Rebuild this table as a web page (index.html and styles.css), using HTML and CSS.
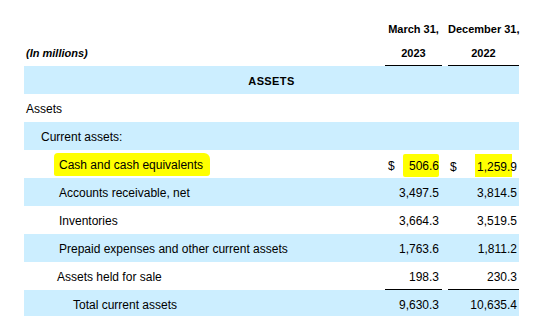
FILE: index.html
```html
<!DOCTYPE html>
<html lang="en">
<head>
  <meta charset="UTF-8" />
  <title>Balance Sheet - Assets</title>
  <link rel="stylesheet" href="styles.css">
</head>
<body>
  <table class="sheet">
    <colgroup>
      <col class="col-label">
      <col class="col-num">
      <col class="col-gap">
      <col class="col-num2">
    </colgroup>
    <thead>
      <tr class="head-row">
        <th></th>
        <th class="head-date">March 31,</th>
        <th></th>
        <th class="head-date">December 31,</th>
      </tr>
      <tr class="head-row">
        <th class="unit">(In millions)</th>
        <th class="head-date ruled">2023</th>
        <th></th>
        <th class="head-date ruled">2022</th>
      </tr>
    </thead>
    <tbody>
      <tr class="band">
        <td colspan="4" class="section">ASSETS</td>
      </tr>
      <tr>
        <td class="lvl0">Assets</td>
        <td></td><td></td><td></td>
      </tr>
      <tr class="band">
        <td class="lvl1">Current assets:</td>
        <td></td><td></td><td></td>
      </tr>
      <tr>
        <td class="lvl2"><span class="mark mark-label">Cash and cash equivalents</span></td>
        <td class="num"><div class="cur"><span>$</span><span class="mark mark-num">506.6</span></div></td>
        <td></td>
        <td class="num num2"><div class="cur"><span>$</span><span class="mark mark-num2">1,259.9</span></div></td>
      </tr>
      <tr class="band">
        <td class="lvl2">Accounts receivable, net</td>
        <td class="num">3,497.5</td><td></td><td class="num num2">3,814.5</td>
      </tr>
      <tr>
        <td class="lvl2">Inventories</td>
        <td class="num">3,664.3</td><td></td><td class="num num2">3,519.5</td>
      </tr>
      <tr class="band">
        <td class="lvl2">Prepaid expenses and other current assets</td>
        <td class="num">1,763.6</td><td></td><td class="num num2">1,811.2</td>
      </tr>
      <tr>
        <td class="lvl2 held">Assets held for sale</td>
        <td class="num ruled">198.3</td><td></td><td class="num num2 ruled">230.3</td>
      </tr>
      <tr class="band">
        <td class="lvl3">Total current assets</td>
        <td class="num">9,630.3</td><td></td><td class="num num2">10,635.4</td>
      </tr>
    </tbody>
  </table>
</body>
</html>
```

FILE: styles.css
```css
body {
  margin: 0;
  padding: 17px 0 0 24px;
  background: #ffffff;
  color: #000000;
  font-family: "Liberation Sans", Arial, sans-serif;
  font-size: 12px;
}

.sheet {
  width: 495px;
  table-layout: fixed;
  border-collapse: collapse;
  border-spacing: 0;
}

.col-label { width: 361px; }
.col-num { width: 57px; }
.col-gap { width: 6px; }
.col-num2 { width: 71px; }

th, td {
  padding: 0;
  white-space: nowrap;
}

.head-row th {
  height: 24px;
  font-size: 11px;
  font-weight: bold;
  vertical-align: middle;
}

.head-date {
  text-align: center;
}

.unit {
  text-align: left;
  font-style: italic;
  padding-left: 2px;
}

.ruled {
  border-bottom: 1px solid #000000;
}

tbody tr {
  height: 28px;
}

tbody td {
  vertical-align: middle;
  padding-top: 3px;
}

.band {
  background-color: #cceeff;
}

.section {
  text-align: center;
  font-size: 11px;
  font-weight: bold;
  letter-spacing: 0.4px;
}

.lvl0 { padding-left: 2px; }
.lvl1 { padding-left: 17px; }
.lvl2 { padding-left: 35px; }
.held { padding-left: 33px; }
.lvl3 { padding-left: 49px; }

.num {
  text-align: right;
  padding-right: 3px;
}

.num2 {
  padding-right: 2px;
}

.cur {
  display: flex;
  justify-content: space-between;
  align-items: baseline;
  padding-left: 3px;
}

.num2 .cur {
  padding-left: 2px;
}

.mark {
  background-color: #ffff00;
  padding: 4px 0;
}

.mark-label {
  padding: 5px 7px 4px 5px;
  margin: 0 -7px 0 -5px;
  border-radius: 4px 6px 3px 2px;
}

.mark-num {
  padding: 5px 0 4px 6px;
  margin-left: -6px;
  border-radius: 2px;
}

.mark-num2 {
  padding: 6px 0 3px 2px;
  margin-left: -2px;
  background: linear-gradient(to right, #ffff00 88%, transparent 88%);
}
```
